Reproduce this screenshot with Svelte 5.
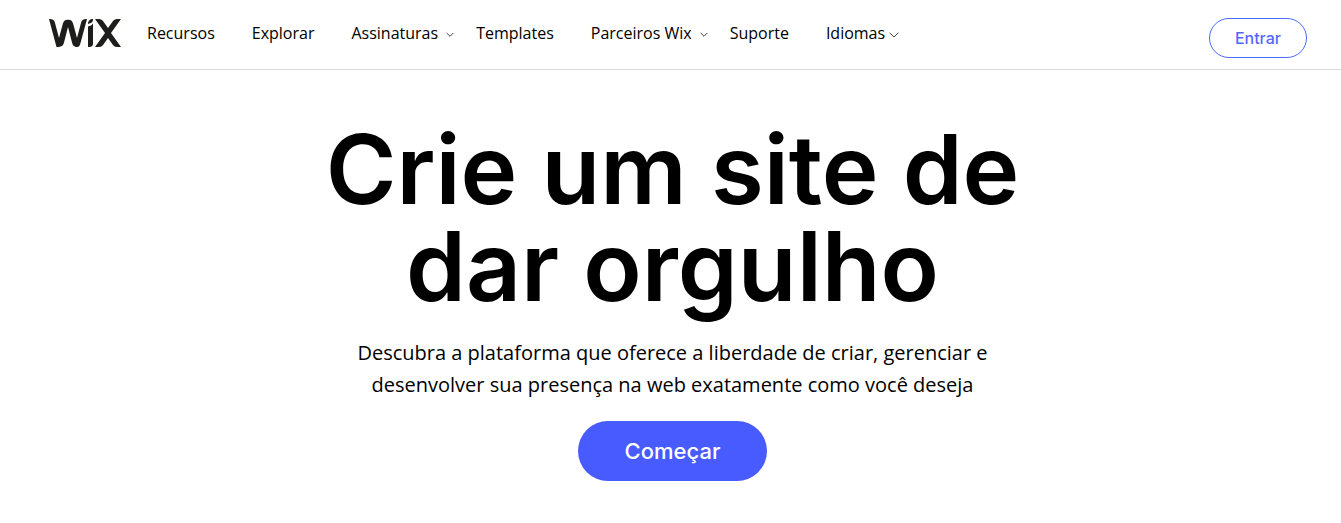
<script>
  const links = [
    { label: 'Recursos' },
    { label: 'Explorar' },
    { label: 'Assinaturas', menu: true },
    { label: 'Templates' },
    { label: 'Parceiros Wix', menu: true },
    { label: 'Suporte' },
  ];
</script>

<header>
  <a class="logo" href="#home" aria-label="Wix">
    <svg viewBox="0 0 72 28" width="72" height="28" aria-hidden="true">
      <g fill="#1d1d1b">
        <path d="M0 0C4 0 5.300 1 6 4L10 19L13.500 6C14.500 2 16 .8 19 .8S23.500 2 24.500 6L28 19L32 4C32.800 1 34 0 38 0L31.500 24C30.700 27 29.500 28 28.500 28C25 28 23.800 26.500 23 23.500L19 8L15 23.500C14.200 26.500 13 28 7.500 28Z" />
        <path d="M39 7.500C41.500 7 43 6 44 4.500V24C44 27 43 28 39 28Z" />
        <path d="M39 5.500C39 1.500 41 0 44 0C44 3 43 3.800 41 4.300C40 4.500 39.300 4.800 39 5.500Z" />
        <path d="M46 0H50C52 0 53 1 54 2L59 9L64 2C65 1 66 0 68 0H72L62 14L72 28H68C66 28 65 27 64 26L59 19L54 26C53 27 52 28 50 28H46L56 14Z" />
      </g>
    </svg>
  </a>
  <nav aria-label="Principal">
    {#each links as link}
      <a class:menu={link.menu} href="#{link.label}">
        {link.label}
        {#if link.menu}
          <svg viewBox="0 0 8 6" width="8" height="6" aria-hidden="true"><path d="M.7 1L4 4.3L7.3 1" /></svg>
        {/if}
      </a>
    {/each}
    <button class="language" type="button">Idiomas<svg viewBox="0 0 10 6" width="10" height="6" aria-hidden="true"><path d="M.7 .8L5 5L9.3 .8" /></svg></button>
  </nav>
  <a class="login" href="#login">Entrar</a>
</header>
<main>
  <h1>Crie um site de dar orgulho</h1>
  <p>Descubra a plataforma que oferece a liberdade de criar, gerenciar e desenvolver sua presença na web exatamente como você deseja</p>
  <a class="start" href="#start">Começar</a>
</main>

<style>
  :global(body) { margin: 0; background: #fff; color: #000; font-family: "Open Sans", sans-serif; }
  header { display: flex; align-items: flex-start; box-sizing: border-box; min-height: 70px; padding: 18px 34px 0 49px; border-bottom: 1px solid #d9d9d9; }
  a { color: inherit; text-decoration: none; }
  .logo { display: block; margin: 1px 26px 0 0; }
  .logo svg { display: block; }
  nav { display: flex; gap: 37px; margin-top: 3px; font-size: 16px; line-height: 24px; white-space: nowrap; }
  nav a, .language { display: flex; align-items: center; }
  .menu { gap: 8px; margin-right: -15px; }
  nav svg { fill: none; stroke: #444; stroke-width: 1; margin-top: 3px; }
  .language { gap: 4px; padding: 0; border: 0; background: none; color: inherit; font: inherit; }
  h1, .login, .start { font-family: Inter, sans-serif; }
  .login { box-sizing: border-box; margin-left: auto; padding: 7px 25px; border: 1px solid #4a6bff; border-radius: 20px; color: #5468ff; font-size: 16px; font-weight: 500; line-height: 24px; }
  main { display: flex; flex-direction: column; align-items: center; padding: 51px 20px 42px 24px; text-align: center; }
  h1 { max-width: 740px; margin: 0; font-size: 96px; line-height: 97px; font-weight: 600; }
  p { max-width: 660px; margin: 22px 0 20px; font-size: 20px; line-height: 32px; }
  .start { padding: 14px 47px; border-radius: 30px; background: #485bff; color: #fff; font-size: 22px; font-weight: 500; line-height: 32px; }
</style>
